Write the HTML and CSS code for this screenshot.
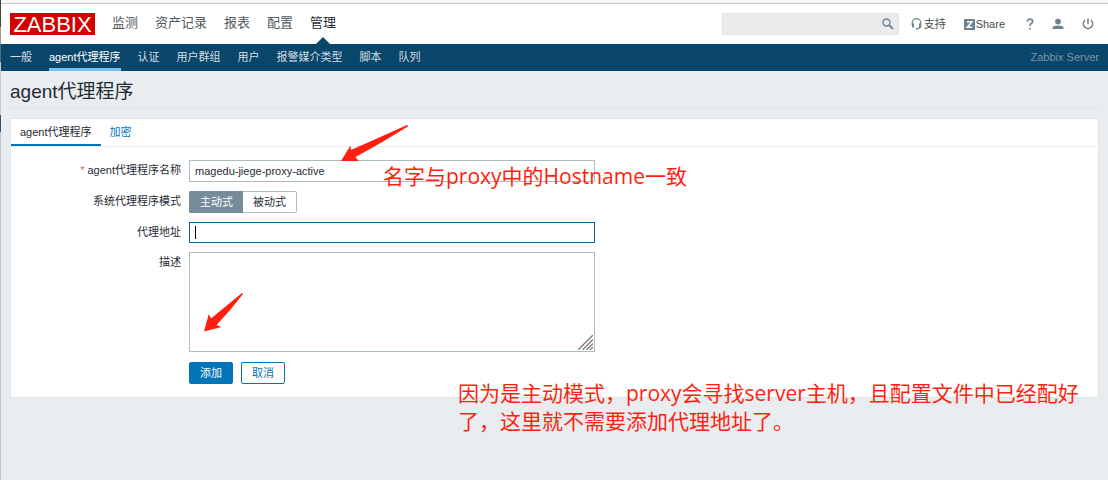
FILE: index.html
```html
<!DOCTYPE html>
<html lang="zh-CN">
<head>
<meta charset="utf-8">
<title>agent代理程序</title>
<link rel="stylesheet" href="styles.css">
</head>
<body>
<header class="header">
  <a class="logo" href="#">ZABBIX</a>
  <nav class="main-nav">
    <a href="#">监测</a>
    <a href="#">资产记录</a>
    <a href="#">报表</a>
    <a href="#">配置</a>
    <a href="#" class="current">管理</a>
  </nav>
  <form class="search">
    <input type="text" class="search-input" aria-label="搜索">
    <button type="button" class="search-button" aria-label="搜索">
      <svg width="12" height="12" viewBox="0 0 12 12" fill="none" stroke="#6d8390"><circle cx="4.5" cy="4.5" r="3.5" stroke-width="1.4"/><path d="M7 7l4 4" stroke-width="1.8"/></svg>
    </button>
  </form>
  <div class="tools">
    <a class="tool" href="#">
      <svg width="11" height="12" viewBox="0 0 11 12" fill="none" stroke="#6d8390" stroke-width="1.2"><path d="M1.2 7V5a4.3 4.3 0 0 1 8.600 0v2.500q0 2.500-3.300 3"/><path d="M2 5.500v4M9 5.500v4" stroke-width="2"/><path d="M5 10.700h2" stroke-width="1.500"/></svg>
      支持</a>
    <a class="tool tool-share" href="#">
      <svg width="11" height="11" viewBox="0 0 11 11"><rect width="11" height="11" fill="#6d8390"/><path d="M3 2.800h5L3.300 8.200H8.200" fill="none" stroke="#fff" stroke-width="1.500"/></svg>
      Share</a>
    <a class="tool" href="#" aria-label="帮助">
      <svg width="8" height="12" viewBox="0 0 8 12" fill="none" stroke="#6d8390" stroke-width="1.700"><path d="M1.300 3.500Q1.300 1.200 4 1.200T6.700 3.400Q6.700 4.600 5.200 5.500T4 8"/><path d="M4 9.700v1.800"/></svg>
    </a>
    <a class="tool" href="#" aria-label="用户">
      <svg width="12" height="12" viewBox="0 0 12 12" fill="#6d8390"><circle cx="6" cy="3.600" r="2.900"/><path d="M.5 11V9.700Q1 7.400 6 7.400T11.500 9.700V11z"/></svg>
    </a>
    <a class="tool" href="#" aria-label="退出">
      <svg width="12" height="12" viewBox="0 0 12 12" fill="none" stroke="#6d8390" stroke-width="1.500"><path d="M3.200 2A4.700 4.700 0 1 0 8.800 2M6 .5v5.500"/></svg>
    </a>
  </div>
</header>
<nav class="sub-nav">
  <a href="#">一般</a>
  <a href="#" class="current">agent代理程序</a>
  <a href="#">认证</a>
  <a href="#">用户群组</a>
  <a href="#">用户</a>
  <a href="#">报警媒介类型</a>
  <a href="#">脚本</a>
  <a href="#">队列</a>
  <span class="server-name">Zabbix Server</span>
</nav>
<main class="page">
  <h1 class="title">agent代理程序</h1>
  <section class="card">
    <div class="tabs">
      <a href="#" class="tab current">agent代理程序</a>
      <a href="#" class="tab">加密</a>
    </div>
    <form class="form">
      <label class="label" for="name"><span class="required">*</span> agent代理程序名称</label>
      <input class="field" id="name" type="text" value="magedu-jiege-proxy-active">
      <span class="label" id="mode-label">系统代理程序模式</span>
      <div class="segmented" role="radiogroup" aria-labelledby="mode-label">
        <input type="radio" name="mode" id="active" checked><label for="active">主动式</label>
        <input type="radio" name="mode" id="passive"><label for="passive">被动式</label>
      </div>
      <label class="label" for="address">代理地址</label>
      <div class="focus-field">
        <input class="field focused" id="address" type="text">
        <span class="caret"></span>
      </div>
      <label class="label" for="description">描述</label>
      <div class="area">
        <textarea class="field" id="description"></textarea>
        <svg class="grip" width="15" height="15" viewBox="0 0 15 15" stroke="#777" stroke-width="1.300"><path d="M0 15L15 0M4.500 15L15 4.500M8.500 15L15 8.500M12 15l3-3"/></svg>
      </div>
      <div class="actions">
        <button type="button" class="button primary">添加</button>
        <button type="button" class="button">取消</button>
      </div>
    </form>
  </section>
</main>
<svg class="arrow arrow-name" width="70" height="40" viewBox="0 0 70 40"><path d="M1 37L10.500 21.500L11 26Q36 15 67 1L68.500 2Q45 17 15.500 33L18.500 37z"/></svg>
<svg class="arrow arrow-add" width="42" height="42" viewBox="0 0 42 42"><path d="M1 40.500L5.800 23L8 27.500Q22 16 39 2L40 3Q28 19 13.500 34L18.500 36z"/></svg>
<p class="note note-name">名字与proxy中的Hostname一致</p>
<p class="note note-address">因为是主动模式，proxy会寻找server主机，且配置文件中已经配好<br>了，这里就不需要添加代理地址了。</p>
</body>
</html>
```

FILE: styles.css
```css
* { box-sizing: border-box; }
body {
  margin: 0;
  padding-left: 1px;
  min-height: 100vh;
  position: relative;
  background: linear-gradient(#444 27px, #a09a90 27px 44px, #56697a 44px 62px, #c8c8c8 62px 115px, #2f5274 115px 132px, #c4c4c4 132px) 0 0 / 1px 100% no-repeat #e9edf0;
  font: 11px/16px "Liberation Sans", "Noto Sans CJK SC", sans-serif;
  color: #1f2c33;
}
a { color: inherit; text-decoration: none; }
input, textarea, button { font: inherit; color: inherit; margin: 0; }
svg { display: block; }

.header {
  display: flex;
  align-items: center;
  height: 44px;
  padding: 4px 14px 0 9px;
  background: linear-gradient(#f7f7fa 3px, #c9c9cc 3px 4px, #fff 4px);
}
.logo {
  width: 85px;
  height: 22px;
  background: #d40000;
  color: #fff;
  font-size: 22px;
  line-height: 23px;
  text-align: center;
}
.main-nav {
  display: flex;
  gap: 17px;
  align-self: stretch;
  margin-left: 17px;
  font-size: 13px;
  line-height: 38px;
  color: #4f5a60;
}
.main-nav .current { position: relative; color: #1f2c33; }
.main-nav .current::after {
  content: "";
  position: absolute;
  left: 6px;
  bottom: 0;
  border: 7px solid transparent;
  border-top: 0;
  border-bottom-color: #0a466a;
}
.search {
  display: flex;
  align-items: center;
  width: 177px;
  height: 22px;
  margin-left: auto;
  background: #ebebeb;
  border: 1px solid #dfe4e7;
}
.search-input { flex: 1; min-width: 0; border: 0; background: none; outline: 0; }
.search-button { padding: 0 4px; border: 0; background: none; }
.tools { display: flex; align-items: center; margin-left: 12px; gap: 18px; color: #444e54; }
.tool { display: flex; align-items: center; gap: 2px; }
.tool-share { gap: 1px; margin-right: 3px; }

.sub-nav {
  display: flex;
  gap: 17px;
  height: 27px;
  padding: 0 9px;
  background: #0a466a;
  color: #d3dde3;
  line-height: 26px;
}
.sub-nav .current { color: #fff; border-bottom: 3px solid #7ac1f2; }
.server-name { margin-left: auto; color: #7a94a5; }

.page { padding: 0 9px; }
.title {
  margin: 0 0 9px;
  height: 38px;
  border-bottom: 1px solid #dfe4e7;
  font-size: 19px;
  font-weight: 400;
  line-height: 41px;
}
.card { background: #fff; border: 1px solid #dfe4e7; }
.tabs { display: flex; height: 28px; border-bottom: 1px solid #e9edf0; line-height: 26px; }
.tab { height: 27px; padding: 0 9px; color: #0275b8; }
.tab.current { color: #1f2c33; border-bottom: 2px solid #0275b8; }

.form {
  display: grid;
  grid-template-columns: 170px minmax(0, 406px);
  gap: 9px 8px;
  padding: 13px 0;
}
.label { padding-top: 2px; text-align: right; }
.required { color: #e45959; }
.field {
  display: block;
  width: 100%;
  height: 22px;
  padding: 0 5px;
  border: 1px solid #acbbc2;
  border-radius: 0;
  background: #fff;
  outline: 0;
}
.field.focused { height: 21px; border-color: #0a6298; }
.focus-field, .area { position: relative; }
.caret { position: absolute; left: 6px; top: 4px; width: 1px; height: 13px; background: #000; }
textarea.field { height: 100px; resize: none; }
.grip { position: absolute; right: 2px; bottom: 2px; }
.segmented { display: flex; position: relative; justify-self: start; line-height: 20px; }
.segmented input { position: absolute; opacity: 0; }
.segmented label { padding: 0 10px; border: 1px solid #acbbc2; }
.segmented label:first-of-type { border-right: 0; border-radius: 2px 0 0 2px; }
.segmented label:last-of-type { border-left: 0; border-radius: 0 2px 2px 0; }
.segmented input:checked + label {
  background: #768d99;
  border-color: #768d99;
  color: #fff;
}
.actions { grid-column: 2; display: flex; gap: 8px; padding-top: 1px; }
.button {
  height: 22px;
  padding: 0 10px;
  border: 1px solid #0275b8;
  border-radius: 2px;
  background: #fff;
  color: #0275b8;
  line-height: 20px;
}
.button.primary { background: #0275b8; color: #fff; }

.arrow { position: absolute; fill: #ff1f10; pointer-events: none; }
.arrow-name { left: 340px; top: 124px; }
.arrow-add { left: 203px; top: 291px; }
.note {
  position: absolute;
  margin: 0;
  color: #ff1f10;
  font: 21px/28px "Open Sans", "Noto Sans CJK SC", sans-serif;
  white-space: nowrap;
}
.note-name { left: 383px; top: 162px; }
.note-address { left: 458px; top: 379px; }
```
